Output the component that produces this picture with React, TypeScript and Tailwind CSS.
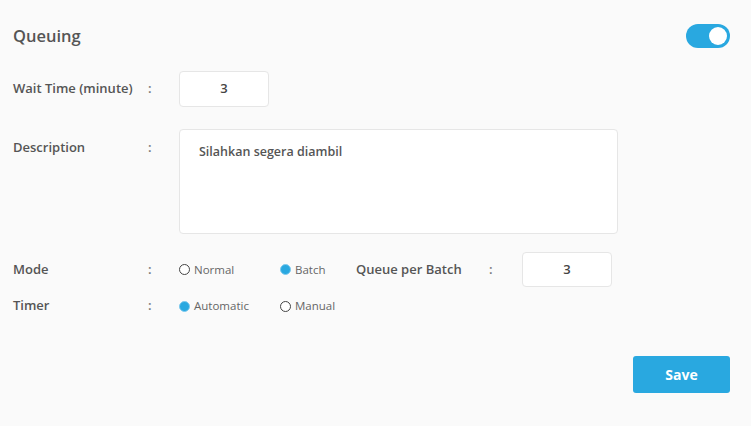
import React from "react";

const Radio = ({ label, checked }: { label: string; checked?: boolean }) => (
  <div className="flex items-center w-[101px] gap-[4px]">
    {checked ? (
      <span className="w-[11px] h-[11px] rounded-full bg-[#29a8e0] border border-[#7cc9ee] shrink-0" />
    ) : (
      <span className="w-[11px] h-[11px] rounded-full border-[1.5px] border-[#444] bg-white shrink-0" />
    )}
    <span className="text-[11.5px] text-[#666]">{label}</span>
  </div>
);

const Label = ({ children }: { children: React.ReactNode }) => (
  <div className="flex shrink-0">
    <span className="w-[135px] text-[13px] font-semibold text-[#555]">{children}</span>
    <span className="w-[31px] text-[13px] font-semibold text-[#777]">:</span>
  </div>
);

const App = () => {
  return (
    <div
      className="w-[751px] h-[426px] bg-[#fafafa] pl-[13px] pr-[21px] pt-[24px]"
      style={{ fontFamily: "'Open Sans', Lato, sans-serif" }}
    >
      <div className="flex items-center justify-between h-[24px]">
        <h2 className="text-[16.5px] font-semibold text-[#555]">Queuing</h2>
        <div className="w-[44px] h-[24px] rounded-full bg-[#29a8e0] flex items-center justify-end pr-[3px]">
          <span className="w-[18px] h-[18px] rounded-full bg-white" />
        </div>
      </div>

      <div className="flex items-center mt-[23px]">
        <Label>Wait Time (minute)</Label>
        <div className="w-[90px] h-[36px] bg-white border border-[#e6e6e6] rounded-[4px] flex items-center justify-center text-[13px] font-semibold text-[#444]">
          3
        </div>
      </div>

      <div className="flex items-start mt-[22px]">
        <div className="pt-[9px]">
          <Label>Description</Label>
        </div>
        <div className="w-[439px] h-[105px] bg-white border border-[#e6e6e6] rounded-[4px] pl-[19px] pt-[13px] text-[12.5px] font-semibold text-[#555]">
          Silahkan segera diambil
        </div>
      </div>

      <div className="flex items-center mt-[18px] h-[35px]">
        <Label>Mode</Label>
        <Radio label="Normal" />
        <Radio label="Batch" checked />
        <span className="ml-[-25px] w-[133px] text-[13px] font-semibold text-[#555]">Queue per Batch</span>
        <span className="w-[33px] text-[13px] font-semibold text-[#777]">:</span>
        <div className="w-[90px] h-[35px] bg-white border border-[#e6e6e6] rounded-[4px] flex items-center justify-center text-[13px] font-semibold text-[#444]">
          3
        </div>
      </div>

      <div className="flex items-center mt-[9px] h-[20px]">
        <Label>Timer</Label>
        <Radio label="Automatic" checked />
        <Radio label="Manual" />
      </div>

      <div className="flex justify-end mt-[40px]">
        <button className="w-[97px] h-[37px] bg-[#29a8e0] rounded-[3px] text-white text-[14px] font-bold">
          Save
        </button>
      </div>
    </div>
  );
};

export default App;
